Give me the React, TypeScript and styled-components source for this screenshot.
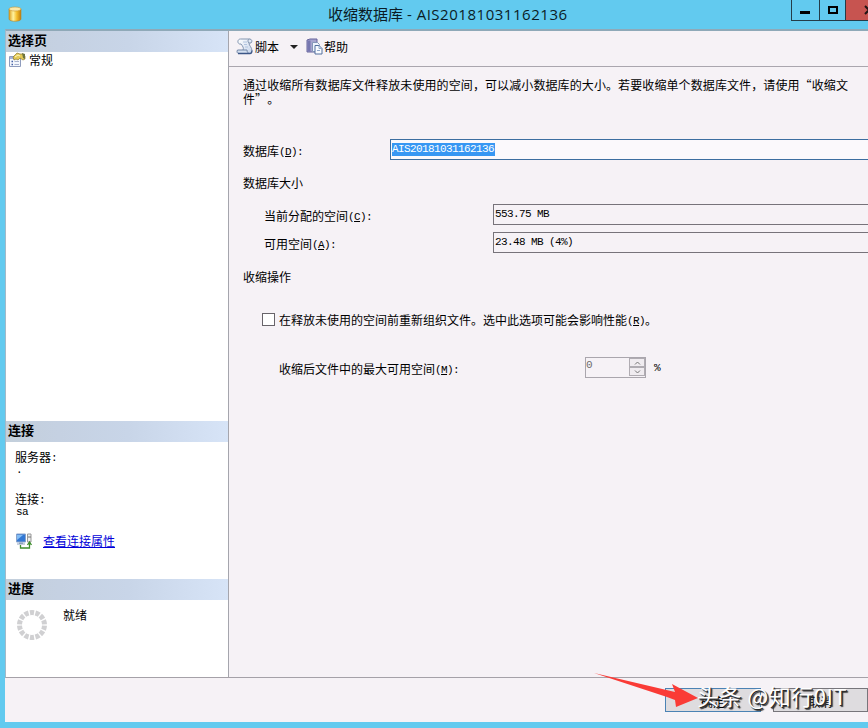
import React from "react";
import styled, { createGlobalStyle } from "styled-components";

const GlobalStyle = createGlobalStyle`
  * { box-sizing: border-box; }
  body {
    margin: 0;
    overflow: hidden;
    font: 12px/14px "Noto Sans CJK SC", sans-serif;
    text-spacing-trim: space-all;
    color: #000;
  }
`;

const Window = styled.div`
  position: relative;
  width: 868px;
  height: 728px;
  overflow: hidden;
  display: flex;
  flex-direction: column;
  background: #62caef;
`;

const TitleBar = styled.header`
  height: 29px;
  flex: none;
  display: flex;
  align-items: flex-start;
`;

const AppIcon = styled.svg`
  width: 14px;
  height: 16px;
  margin: 6px 0 0 8px;
`;

const Title = styled.h1`
  flex: 1;
  margin: 0 0 0 306px;
  font: 400 15px/29px "Open Sans", "Noto Sans CJK SC", sans-serif;
  white-space: nowrap;
  color: #0b1c26;
`;

const TitleLatin = styled.span`
  margin-left: 1px;
  font-size: 15px;
  letter-spacing: 0.53px;
`;

const Caption = styled.button<{ $w: number; $close?: boolean }>`
  width: ${(p) => p.$w}px;
  height: 21px;
  padding: 0;
  border: 1px solid #243c48;
  border-width: 0 0 1px 1px;
  background: ${(p) => (p.$close ? "#c75450" : "transparent")};
  svg { display: block; }
`;

const Body = styled.div`
  flex: none;
  height: 649px;
  margin-left: 5px;
  display: flex;
  border-top: 2px solid #8fa9b8;
  border-left: 1px solid #a3b9c8;
  border-bottom: 1px solid #a5a1a8;
`;

const Sidebar = styled.aside`
  width: 223px;
  flex: none;
  background: #fff;
  border-right: 1px solid #a5a5ad;
`;

const SideSection = styled.section<{ $h: number }>`
  height: ${(p) => p.$h}px;
`;

const SideHeader = styled.h2`
  margin: 0;
  height: 21px;
  padding-left: 2px;
  font: 700 13px/17px "Noto Sans CJK SC", sans-serif;
  background: linear-gradient(90deg, #c3cfdb 0%, #c5d1e2 24%, #c8d5e8 55%, #d7e4f7 100%);
`;

const PageItem = styled.div`
  display: flex;
  align-items: center;
  height: 16px;
  padding-left: 3px;
  gap: 3px;
`;

const ConnInfo = styled.div`
  padding: 8px 0 0 9px;
`;

const ConnValue = styled.div`
  height: 12px;
  padding-left: 1px;
  font: 11px/12px "Liberation Mono", monospace;
  letter-spacing: -0.6px;
`;

const ConnLabel = styled.div<{ $gap?: number }>`
  height: 14px;
  margin-top: ${(p) => p.$gap ?? 0}px;
`;

const LinkRow = styled.div`
  display: flex;
  align-items: center;
  gap: 10px;
  margin: 15px 0 0 1px;
`;

const Link = styled.a`
  color: #0000d8;
  text-decoration: underline;
  text-underline-offset: 1px;
`;

const Progress = styled.div`
  display: flex;
  padding: 9px 0 0 10px;
  gap: 15px;
  line-height: 11px;
`;

const Main = styled.main`
  flex: 1;
  min-width: 0;
  background: #f6f2f6;
`;

const Toolbar = styled.div`
  height: 36px;
  display: flex;
  align-items: center;
  padding: 0 0 4px 7px;
  border-bottom: 1px solid #aaa6ae;
`;

const ToolLabel = styled.span<{ $gap: number }>`
  margin: 0 ${(p) => p.$gap}px 0 1px;
`;

const Description = styled.p`
  margin: 11px 0 0 14px;
  width: 616px;
  height: 29px;
  letter-spacing: 0.1px;
  white-space: nowrap;
`;

const Row = styled.div<{ $top: number; $indent?: number }>`
  height: 21px;
  margin-top: ${(p) => p.$top}px;
  padding-left: ${(p) => p.$indent ?? 14}px;
  display: flex;
  align-items: center;
`;

const Label = styled.label<{ $w?: number; $drop?: number }>`
  width: ${(p) => (p.$w ? `${p.$w}px` : "auto")};
  padding-top: ${(p) => p.$drop ?? 2}px;
  flex: none;
  white-space: nowrap;
`;

const SectionTitle = styled.h3`
  margin: 0;
  padding-bottom: 2px;
  font: inherit;
`;

const Mono = styled.span`
  font-family: "Liberation Mono", monospace;
  font-size: 11px;
  line-height: 10px;
  letter-spacing: -0.6px;
  vertical-align: 1px;
`;

const Field = styled.div<{ $active?: boolean }>`
  flex: 1;
  height: 21px;
  padding: 3px 0 0 1px;
  border: 1px solid ${(p) => (p.$active ? "#3c6ea0" : "#77737a")};
  border-right: 0;
  background: ${(p) => (p.$active ? "#fbf9fc" : "#f6f2f6")};
  font: 11px/12px "Liberation Mono", monospace;
  letter-spacing: -0.6px;
  white-space: pre;
`;

const Selection = styled.span`
  display: inline-block;
  height: 13px;
  padding-right: 1px;
  background: #3797f3;
  color: #fff;
`;

const Checkbox = styled.span`
  width: 13px;
  height: 13px;
  margin-right: 4px;
  border: 1px solid #68646a;
  background: #fff;
`;

const Spinner = styled.div`
  width: 61px;
  height: 21px;
  display: flex;
  justify-content: space-between;
  border: 1px solid #aaa6ad;
  color: #6d6d6d;
  font: 11px/15px "Liberation Mono", monospace;
`;

const SpinButtons = styled.div`
  width: 16px;
  display: flex;
  flex-direction: column;
`;

const SpinButton = styled.button`
  height: 9px;
  padding: 0;
  border: 1px solid #b0acb2;
  background: #f0ecf0;
  display: flex;
  justify-content: center;
  align-items: center;
`;

const Percent = styled(Mono)`
  margin: 1px 0 0 8px;
`;

const Footer = styled.footer`
  flex: none;
  height: 44px;
  margin-left: 5px;
  padding-top: 10px;
  display: flex;
  justify-content: flex-end;
  gap: 12px;
  background: #f6f2f6;
`;

const Button = styled.button<{ $primary?: boolean }>`
  width: ${(p) => (p.$primary ? 96 : 95)}px;
  height: 24px;
  padding: 3px 0 0;
  border: 1px solid ${(p) => (p.$primary ? "#4b82b4" : "#77757b")};
  background: #dedcdf;
  font: 12px/18px "Noto Sans CJK SC", sans-serif;
  color: #000;
`;

const Arrow = styled.svg`
  position: absolute;
  left: 592px;
  top: 670px;
`;

const Watermark = styled.div`
  position: absolute;
  left: 697px;
  top: 680px;
  font: 400 22px/30px "Noto Sans CJK SC", sans-serif;
  letter-spacing: 0.5px;
  white-space: nowrap;
  color: #fff;
  text-shadow: 1px 1px 0 #2a2a2a, 2px 2px 1px #333;
`;

const DatabaseIcon = () => (
  <AppIcon viewBox="0 0 14 16">
    <defs>
      <linearGradient id="gold">
        <stop offset="0" stopColor="#d89a1c" />
        <stop offset=".35" stopColor="#fff3a0" />
        <stop offset=".65" stopColor="#f5bd2c" />
        <stop offset="1" stopColor="#bd7c10" />
      </linearGradient>
    </defs>
    <path d="M1 3v10c0 3 12 3 12 0V3z" fill="url(#gold)" stroke="#b98424" strokeWidth=".6" />
    <ellipse cx="7" cy="3" rx="6" ry="2" fill="#fbe9a8" stroke="#c79633" strokeWidth=".6" />
  </AppIcon>
);

const PropertiesIcon = () => (
  <svg width="17" height="16" viewBox="0 0 17 16">
    <path d="M.5 4.500h11v10H.5z" fill="#f4f7fd" stroke="#8f9cbd" />
    <path d="M1 5h6v2H1z" fill="#a5b4dc" />
    <path d="M2.500 9.500h1.500m-1.500 3h1.500" stroke="#4561a5" strokeWidth="1.500" />
    <path d="M5.500 9.500h4.500m-4.500 3h4.500" stroke="#a7b2ce" />
    <path d="M4 5l4-4 3 1h3l2 2v3l-2 1-3-2-2 2-2-1-2 1z" fill="#e4ca57" stroke="#8b7930" strokeWidth=".7" />
    <path d="M13 1l3 1v5l-2-1z" fill="#6d7440" />
    <path d="M6 5l3-2 2 1" stroke="#fff7bd" fill="none" />
  </svg>
);

const ScriptIcon = () => (
  <svg width="18" height="17" viewBox="0 0 18 17">
    <defs>
      <linearGradient id="paper" x1="0" y1="0" x2="1" y2="1">
        <stop offset="0" stopColor="#ffffff" />
        <stop offset="1" stopColor="#c3d2ea" />
      </linearGradient>
    </defs>
    <path d="M4.500 1h9c2.500 0 3 2.500 1.500 4h-2c0 3 3 4 3 8 0 1.500-1 3-2.500 3h-7L6 12c2-1 0-4-1.500-6C1 5.500 1.500 1 4.500 1z" fill="url(#paper)" />
    <path d="M4.500 1h9c2.500 0 3 2.500 1.500 4h-2c0 3 3 4 3 8M4.500 1C1.500 1 1 5 3.500 6H5c2 2.500 3 4 2 6" fill="none" stroke="#8496b1" />
    <path d="M13.500 1c-2 .5-2 3-.5 4" fill="none" stroke="#8496b1" />
    <path d="M1.500 12h9.500c0 2 1 3.500 2.500 3.500H3C1 15.500.5 13.500 1.500 12z" fill="#d5e0f1" stroke="#7387a8" />
    <path d="M2 15.500h12c1 0 2-1 2-3" fill="none" stroke="#3c5687" strokeWidth="1.300" />
    <path d="M7 4h4M8 6.500h3M9 9h3" stroke="#b2c4df" />
  </svg>
);

const HelpIcon = () => (
  <svg width="17" height="17" viewBox="0 0 17 17">
    <path d="M1 2l3-1h7v13H1z" fill="#a6a4ce" stroke="#66659c" />
    <path d="M1.500 2.500h3v11h-3z" fill="#7777b0" />
    <path d="M6.500 4.500h5l2 2v7h-7z" fill="#eef3fd" stroke="#8496b8" />
    <path d="M9 7.500h4l3 3V16H9z" fill="#f9fbff" stroke="#536f9d" />
    <path d="M13 7.500v3h3M11 12.500h3" fill="none" stroke="#91a9cb" />
  </svg>
);

const ConnectionIcon = () => (
  <svg width="17" height="16" viewBox="0 0 17 16">
    <path d="M.5 1h9v8h-9z" fill="#3278d4" stroke="#88a2ca" />
    <path d="M1 2h6L1 7z" fill="#83bdf5" />
    <path d="M3 10h4m-6 1h8" stroke="#8da1bd" strokeWidth="1.200" />
    <path d="M11.500 1h3.500v8h-3.500z" fill="#eee" stroke="#999" />
    <path d="M12 4h3" stroke="#777" />
    <path d="M4.500 12v3h9v-4m-2 1 2-3 2 3" stroke="#3e8e2d" strokeWidth="1.300" fill="none" />
  </svg>
);

const BusyRing = () => (
  <svg width="32" height="32" viewBox="0 0 32 32">
    <circle cx="16" cy="16" r="12.500" fill="none" stroke="#d0d0d2" strokeWidth="5" pathLength="140" strokeDasharray="7.500 2.500" strokeDashoffset="-1.250" />
  </svg>
);

export default function App() {
  return (
    <Window>
      <GlobalStyle />
      <TitleBar>
        <DatabaseIcon />
        <Title>收缩数据库 - <TitleLatin>AIS20181031162136</TitleLatin></Title>
        <Caption $w={28} aria-label="最小化">
          <svg width="27" height="20"><path d="M8 11h10v3H8z" /></svg>
        </Caption>
        <Caption $w={26} aria-label="最大化">
          <svg width="25" height="20"><path d="M9 7h8v6H9z" fill="none" stroke="#000" strokeWidth="2" /></svg>
        </Caption>
        <Caption $w={23} $close aria-label="关闭">
          <svg width="22" height="20"><path d="m19 6 8 8m0-8-8 8" stroke="#201414" strokeWidth="2" /></svg>
        </Caption>
      </TitleBar>
      <Body>
        <Sidebar>
          <SideSection $h={390}>
            <SideHeader>选择页</SideHeader>
            <PageItem><PropertiesIcon />常规</PageItem>
          </SideSection>
          <SideSection $h={158}>
            <SideHeader>连接</SideHeader>
            <ConnInfo>
              <ConnLabel>服务器<Mono>:</Mono></ConnLabel>
              <ConnValue>.</ConnValue>
              <ConnLabel $gap={16}>连接<Mono>:</Mono></ConnLabel>
              <ConnValue>sa</ConnValue>
              <LinkRow><ConnectionIcon /><Link>查看连接属性</Link></LinkRow>
            </ConnInfo>
          </SideSection>
          <SideSection $h={98}>
            <SideHeader>进度</SideHeader>
            <Progress><BusyRing />就绪</Progress>
          </SideSection>
        </Sidebar>
        <Main>
          <Toolbar>
            <ScriptIcon />
            <ToolLabel $gap={11}>脚本</ToolLabel>
            <svg width="8" height="4"><path d="M0 0h8L4 4z" fill="#222" /></svg>
            <ToolLabel $gap={7} />
            <HelpIcon />
            <ToolLabel $gap={0}>帮助</ToolLabel>
          </Toolbar>
          <Description>
            通过收缩所有数据库文件释放未使用的空间，可以减小数据库的大小。若要收缩单个数据库文件，请使用“收缩文<br />件”。
          </Description>
          <Row $top={32}>
            <Label $w={147}>数据库<Mono>(<u>D</u>):</Mono></Label>
            <Field $active><Selection>AIS20181031162136</Selection></Field>
          </Row>
          <Row $top={13}><SectionTitle>数据库大小</SectionTitle></Row>
          <Row $top={10} $indent={35}>
            <Label $w={229}>当前分配的空间<Mono>(<u>C</u>):</Mono></Label>
            <Field>553.75 MB</Field>
          </Row>
          <Row $top={7} $indent={35}>
            <Label $w={229}>可用空间<Mono>(<u>A</u>):</Mono></Label>
            <Field>23.48 MB (4%)</Field>
          </Row>
          <Row $top={14}><SectionTitle>收缩操作</SectionTitle></Row>
          <Row $top={21} $indent={33}>
            <Checkbox />
            <Label $drop={0}>在释放未使用的空间前重新组织文件。选中此选项可能会影响性能<Mono>(<u>R</u>)</Mono>。</Label>
          </Row>
          <Row $top={27} $indent={50}>
            <Label $w={306} $drop={3}>收缩后文件中的最大可用空间<Mono>(<u>M</u>):</Mono></Label>
            <Spinner>
              0
              <SpinButtons>
                <SpinButton><svg width="7" height="4"><path d="m1 3.500 2.500-2.500L6 3.500" fill="none" stroke="#777" /></svg></SpinButton>
                <SpinButton><svg width="7" height="4"><path d="m1 .5 2.500 2.500L6 .5" fill="none" stroke="#777" /></svg></SpinButton>
              </SpinButtons>
            </Spinner>
            <Percent>%</Percent>
          </Row>
        </Main>
      </Body>
      <Footer>
        <Button $primary>确定</Button>
        <Button>取消</Button>
      </Footer>
      <Watermark>头条 @知行0IT</Watermark>
      <Arrow width="108" height="38">
        <path d="M2 3 83 22 80 14 106 28 84 37 83 30 75 27Z" fill="#fa3b36" />
      </Arrow>
    </Window>
  );
}
